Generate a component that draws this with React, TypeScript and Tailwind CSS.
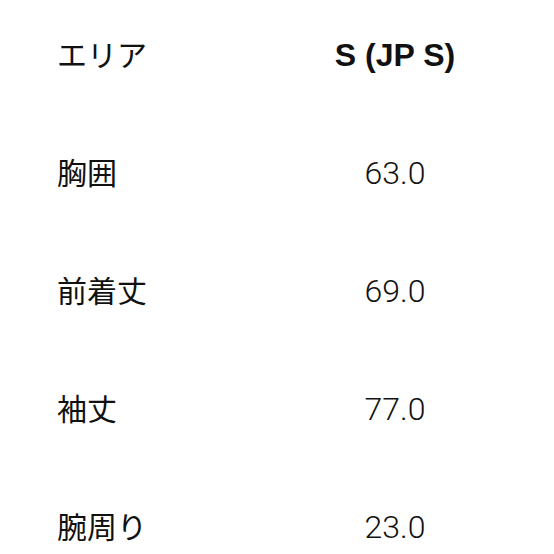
import React from 'react';

interface SizeRow {
  label: string;
  value: string;
}

const rows: SizeRow[] = [
  { label: '胸囲', value: '63.0' },
  { label: '前着丈', value: '69.0' },
  { label: '袖丈', value: '77.0' },
  { label: '腕周り', value: '23.0' },
];

const jp = "font-['Liberation_Sans','Noto_Sans_CJK_JP',sans-serif]";

export default function App() {
  return (
    <div className="w-[554px] h-[554px] bg-white text-[#111] overflow-hidden pt-[35px] pl-[57px] flex flex-col gap-[78px]">
      {/* header */}
      <div className="flex items-center h-[40px]">
        <div className={`w-[276px] text-[30px] ${jp}`}>エリア</div>
        <div className="w-[124px] text-center text-[32px] font-bold font-['Liberation_Sans',sans-serif] whitespace-nowrap">
          S (JP S)
        </div>
      </div>

      {rows.map((row) => (
        <div key={row.label} className="flex items-center h-[40px]">
          <div className={`w-[276px] text-[30px] ${jp}`}>{row.label}</div>
          <div className="w-[124px] text-center text-[32px] font-light font-['Roboto',sans-serif]">
            {row.value}
          </div>
        </div>
      ))}
    </div>
  );
}
